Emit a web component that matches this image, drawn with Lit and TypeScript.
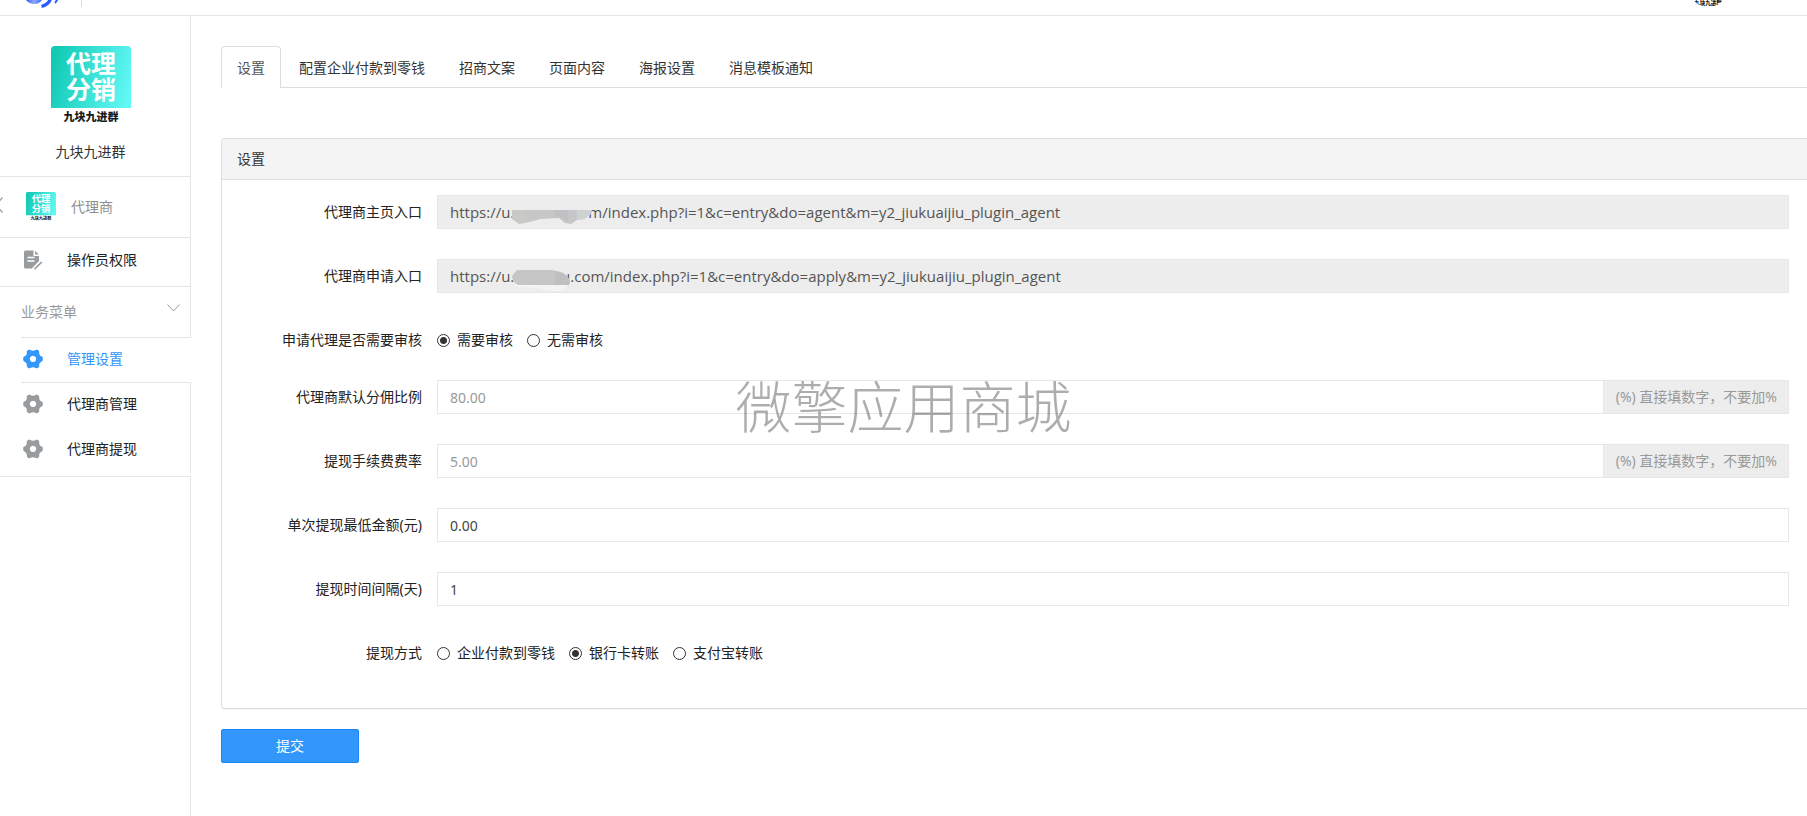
import { LitElement, html, svg, css, nothing } from "lit";
import { customElement, property, state } from "lit/decorators.js";
import { classMap } from "lit/directives/class-map.js";

const fontStack = css`"Noto Sans", "Noto Sans CJK SC", sans-serif`;

@customElement("agent-logo")
class AgentLogo extends LitElement {
  static styles = css`
    :host {
      display: block;
    }
    svg {
      display: block;
      width: 100%;
      height: 100%;
    }
    .title {
      font: 700 25px "Noto Sans CJK SC", sans-serif;
      fill: #fff;
    }
    .caption {
      font: 900 11px "Noto Sans CJK SC", sans-serif;
      fill: #1c1c1c;
    }
  `;

  @property({ type: Boolean, attribute: "caption-only" }) captionOnly = false;

  render() {
    return html`
      <svg viewBox="0 0 80 80" aria-hidden="true">
        <defs>
          <linearGradient id="teal" x1="0" y1="0.4" x2="1" y2="0.6">
            <stop offset="0" stop-color="#12c9b5" />
            <stop offset="1" stop-color="#60f8f4" />
          </linearGradient>
        </defs>
        <path d="M0 62V4a4 4 0 0 1 4-4h72a4 4 0 0 1 4 4v58z" fill="url(#teal)" />
        ${this.captionOnly
          ? nothing
          : svg`
              <text class="title" x="40" y="27" text-anchor="middle">代理</text>
              <text class="title" x="40" y="53" text-anchor="middle">分销</text>
            `}
        <text class="caption" x="40" y="75" text-anchor="middle">九块九进群</text>
      </svg>
    `;
  }
}

const gearIcon = svg`
  <path fill="currentColor" fill-rule="evenodd" d="M5.2 0.9 Q6.2 0.3 7.2 0.9 Q10 2.4 12.8 0.9 Q13.8 0.3 14.8 0.9 L15.6 1.5 Q16.4 2.2 16.2 3.2 Q16 6.6 18.8 7.4 Q19.7 7.8 19.8 8.7 L19.8 11.1 Q19.7 12 18.8 12.4 Q16 13.4 16.2 16.6 Q16.4 17.6 15.6 18.3 L14.8 18.9 Q13.8 19.5 12.8 18.9 Q10 17.4 7.2 18.9 Q6.2 19.5 5.2 18.9 L4.4 18.3 Q3.6 17.6 3.8 16.6 Q4 13.4 1.2 12.4 Q0.3 12 0.2 11.1 L0.2 8.7 Q0.3 7.8 1.2 7.4 Q4 6.6 3.8 3.2 Q3.6 2.2 4.4 1.5 Z M10 6.7 a3.2 3.2 0 1 0 0.01 0 Z"/>
`;

const docIcon = svg`
  <path fill="currentColor" d="M2.500 0.500H10.500V6H16V11L8.800 18.500H2.500A1.500 1.500 0 0 1 1 17V2A1.500 1.500 0 0 1 2.500 0.500z"/>
  <path fill="currentColor" d="M12 0.700L15.800 4.500H12z"/>
  <path stroke="#fff" stroke-width="1.300" fill="none" d="M4.500 7.500H11.500M4.500 11H11.500"/>
  <path stroke="currentColor" stroke-width="1.700" fill="none" d="M11.500 19.200L18.700 12"/>
`;

interface MenuItem {
  id: string;
  label: string;
}

const menuItems: MenuItem[] = [
  { id: "settings", label: "管理设置" },
  { id: "agents", label: "代理商管理" },
  { id: "withdraw", label: "代理商提现" },
];

@customElement("side-bar")
class SideBar extends LitElement {
  @state() private active = "settings";

  static styles = css`
    :host {
      display: flex;
      flex-direction: column;
      width: 191px;
      flex: none;
    }
    .brand,
    .agent,
    .operator,
    .group,
    .item,
    .filler {
      box-sizing: border-box;
      border-right: 1px solid #e5e5e5;
    }
    .brand {
      height: 161px;
      padding: 30px 9px 0 0;
      border-bottom: 1px solid #e5e5e5;
      display: flex;
      flex-direction: column;
      align-items: center;
      gap: 16px;
      color: #333;
    }
    .brand agent-logo {
      width: 80px;
      height: 80px;
    }
    .agent {
      height: 61px;
      border-bottom: 1px solid #e5e5e5;
      display: flex;
      align-items: center;
      color: #8f8f8f;
      text-decoration: none;
    }
    .back {
      width: 3px;
      height: 16px;
      margin-right: 23px;
      padding-bottom: 4px;
      overflow: hidden;
    }
    .agent agent-logo {
      width: 30px;
      height: 30px;
      margin-right: 15px;
    }
    .operator,
    .item {
      display: flex;
      align-items: center;
      gap: 24px;
      padding-left: 23px;
      color: #222;
      text-decoration: none;
    }
    .operator {
      height: 49px;
      padding-bottom: 5px;
      border-bottom: 1px solid #e5e5e5;
    }
    .icon {
      width: 20px;
      height: 20px;
      color: #999c9e;
      flex: none;
    }
    .group {
      height: 51px;
      margin-left: 21px;
      padding: 0 10px 0 0;
      display: flex;
      align-items: center;
      justify-content: space-between;
      font: inherit;
      color: #999;
      background: none;
      border-width: 0 1px 1px 0;
      border-style: solid;
      border-color: #e5e5e5;
      text-align: left;
    }
    .chevron {
      width: 13px;
      height: 8px;
      padding-bottom: 8px;
    }
    .list {
      display: flex;
      flex-direction: column;
      padding-bottom: 3px;
      border-bottom: 1px solid #e5e5e5;
    }
    .item {
      height: 45px;
      padding-left: 2px;
      margin-left: 21px;
      padding-bottom: 4px;
    }
    .item.active {
      color: #3296fa;
      border-right-color: transparent;
      border-bottom: 1px solid #e5e5e5;
      padding-bottom: 3px;
    }
    .item.active .icon {
      color: #3296fa;
    }
    .filler {
      flex: 1;
    }
  `;

  private pick(e: Event, id: string) {
    e.preventDefault();
    this.active = id;
  }

  render() {
    return html`
      <div class="brand">
        <agent-logo></agent-logo>
        <span>九块九进群</span>
      </div>
      <a class="agent" href="#agent">
        <svg class="back" viewBox="0 0 3 16" aria-hidden="true">
          <path d="M2.500 0.500L-4 8L2.500 15.500" fill="none" stroke="#999" stroke-width="1.200" />
        </svg>
        <agent-logo></agent-logo>
        <span>代理商</span>
      </a>
      <a class="operator" href="#operator">
        <svg class="icon" viewBox="0 0 20 20" aria-hidden="true">${docIcon}</svg>
        <span>操作员权限</span>
      </a>
      <button class="group" type="button">
        <span>业务菜单</span>
        <svg class="chevron" viewBox="0 0 13 8" aria-hidden="true">
          <path d="M0.500 0.500L6.500 7L12.500 0.500" fill="none" stroke="#999" />
        </svg>
      </button>
      <nav class="list">
        ${menuItems.map(
          (m) => html`
            <a
              class=${classMap({ item: true, active: m.id === this.active })}
              href="#${m.id}"
              @click=${(e: Event) => this.pick(e, m.id)}
            >
              <svg class="icon" viewBox="0 0 20 20" aria-hidden="true">${gearIcon}</svg>
              <span>${m.label}</span>
            </a>
          `
        )}
      </nav>
      <div class="filler"></div>
    `;
  }
}

interface Field {
  id: string;
  label: string;
  kind: "link" | "rate" | "text" | "radio";
  value: string;
  options?: string[];
  mask?: unknown;
}

const gap = (n: number) => "\u00a0".repeat(n);

const homeMask = html`
  <svg class="mask" viewBox="0 0 90 34" aria-hidden="true">
    <path d="M3 15h80l-2 5-6 4-7 1-6 4-6-1-6-5-18 1-16 4-6 1-7-5z" fill="#c6c7c6" />
    <path d="M3 15h14v12l-5 1-7-4z" fill="#c9cac6" />
    <path d="M45 15h14v13l-9-6-5 1z" fill="#c0c1c4" />
    <path d="M68 15h15l-2 5-6 4-7 1z" fill="#d0d1d1" />
  </svg>
`;

const applyMask = html`
  <svg class="mask" viewBox="0 0 90 34" aria-hidden="true">
    <path d="M4 26h54l-5 6-10 0-14-3-20-1z" fill="#f4f4f4" />
    <path d="M8 11h35l9 2 6 4 3 5-1 4H9l-5-4-1-5z" fill="#c6c6c6" />
    <path d="M46 12l8 2 5 4 2 4-1 4H46z" fill="#bfbfbf" />
  </svg>
`;

const rateHint = "(%) 直接填数字，不要加%";

const fields: Field[] = [
  {
    id: "home",
    label: "代理商主页入口",
    kind: "link",
    value: `https://u.${gap(19)}m/index.php?i=1&c=entry&do=agent&m=y2_jiukuaijiu_plugin_agent`,
    mask: homeMask,
  },
  {
    id: "apply",
    label: "代理商申请入口",
    kind: "link",
    value: `https://u.${gap(12)}u.com/index.php?i=1&c=entry&do=apply&m=y2_jiukuaijiu_plugin_agent`,
    mask: applyMask,
  },
  {
    id: "review",
    label: "申请代理是否需要审核",
    kind: "radio",
    value: "需要审核",
    options: ["需要审核", "无需审核"],
  },
  { id: "share", label: "代理商默认分佣比例", kind: "rate", value: "80.00" },
  { id: "fee", label: "提现手续费费率", kind: "rate", value: "5.00" },
  { id: "minimum", label: "单次提现最低金额(元)", kind: "text", value: "0.00" },
  { id: "interval", label: "提现时间间隔(天)", kind: "text", value: "1" },
  {
    id: "method",
    label: "提现方式",
    kind: "radio",
    value: "银行卡转账",
    options: ["企业付款到零钱", "银行卡转账", "支付宝转账"],
  },
];

@customElement("form-row")
class FormRow extends LitElement {
  @property({ attribute: false }) field!: Field;

  static styles = css`
    :host {
      display: block;
    }
    .row {
      display: grid;
      grid-template-columns: 185px minmax(0, 1fr);
      column-gap: 15px;
      margin-bottom: 30px;
    }
    .name {
      text-align: right;
      line-height: 20px;
      padding-top: 7px;
      color: #222;
    }
    .control {
      position: relative;
      display: flex;
    }
    .box {
      box-sizing: border-box;
      flex: 1;
      min-width: 0;
      height: 34px;
      padding: 0 12px;
      border: 1px solid #e7e7e7;
      border-radius: 0;
      background: #fff;
      color: #444;
      font: inherit;
      outline: none;
    }
    .box[readonly] {
      background: #ededed;
      color: #555;
      font-family: "Open Sans", sans-serif;
      font-size: 15px;
    }
    .box.rate {
      color: #999;
      border-right: 0;
    }
    .hint {
      box-sizing: border-box;
      height: 34px;
      padding: 0 11px 0 12px;
      border: 1px solid #e7e7e7;
      background: #ededed;
      color: #999;
      line-height: 32px;
      white-space: nowrap;
    }
    .mask {
      position: absolute;
      left: 72px;
      top: 0;
      width: 90px;
      height: 34px;
      pointer-events: none;
    }
    .options {
      display: flex;
      gap: 14px;
      height: 27px;
      padding-top: 7px;
      box-sizing: border-box;
    }
    .option {
      display: flex;
      align-items: center;
      gap: 7px;
      height: 20px;
      color: #222;
    }
    .radio {
      appearance: none;
      box-sizing: border-box;
      width: 13px;
      height: 13px;
      margin: 0;
      border: 1px solid #333;
      border-radius: 50%;
      background: #fff;
    }
    .radio:checked {
      background: radial-gradient(circle, #333 0 3px, #fff 4px);
    }
  `;

  private control(f: Field) {
    if (f.kind === "radio") {
      return html`
        <div class="options" role="radiogroup" aria-labelledby=${f.id}>
          ${f.options!.map(
            (o) => html`
              <label class="option">
                <input class="radio" type="radio" name=${f.id} .checked=${o === f.value} />
                <span>${o}</span>
              </label>
            `
          )}
        </div>
      `;
    }
    return html`
      <div class="control">
        <input
          id=${f.id}
          class=${classMap({ box: true, rate: f.kind === "rate" })}
          type="text"
          .value=${f.value}
          ?readonly=${f.kind === "link"}
        />
        ${f.kind === "rate" ? html`<span class="hint">${rateHint}</span>` : nothing}
        ${f.mask ?? nothing}
      </div>
    `;
  }

  render() {
    const f = this.field;
    return html`
      <div class="row">
        ${f.kind === "radio"
          ? html`<span class="name" id=${f.id}>${f.label}</span>`
          : html`<label class="name" for=${f.id}>${f.label}</label>`}
        ${this.control(f)}
      </div>
    `;
  }
}

const tabs = ["设置", "配置企业付款到零钱", "招商文案", "页面内容", "海报设置", "消息模板通知"];

@customElement("app-root")
class AppRoot extends LitElement {
  @state() private tab = 0;

  static styles = css`
    :host {
      position: relative;
      display: flex;
      flex-direction: column;
      min-height: 100vh;
      overflow: hidden;
      font-family: ${fontStack};
      font-size: 14px;
      line-height: 20px;
      color: #333;
      background: #fff;
    }
    .top {
      box-sizing: border-box;
      height: 16px;
      border-bottom: 1px solid #e5e5e5;
      display: flex;
      align-items: flex-start;
      padding: 0 79px 0 26px;
      overflow: hidden;
    }
    .mark {
      width: 34px;
      height: 9px;
    }
    .divider {
      width: 1px;
      height: 7px;
      margin-left: 21px;
      background: #ddd;
    }
    .avatar {
      width: 40px;
      height: 40px;
      margin-left: auto;
      align-self: flex-end;
      margin-bottom: 8px;
      flex: none;
      border-radius: 50%;
      overflow: hidden;
    }
    .body {
      flex: 1;
      display: flex;
    }
    .main {
      flex: 1;
      min-width: 0;
      padding: 30px 0 30px 30px;
    }
    .tabs {
      display: flex;
      gap: 2px;
      border-bottom: 1px solid #ddd;
      margin-bottom: 50px;
    }
    .tab {
      padding: 11px 15px 9px;
      height: 20px;
      border: 1px solid transparent;
      border-bottom: 0;
      border-radius: 4px 4px 0 0;
      margin-bottom: -1px;
      color: #333;
      text-decoration: none;
      white-space: nowrap;
    }
    .tab.active {
      padding-bottom: 10px;
      border-color: #ddd;
      background: #fff;
      color: #555;
    }
    .panel {
      border: 1px solid #ddd;
      border-right: 0;
      border-radius: 4px 0 0 4px;
      box-shadow: 0 1px 1px rgba(0, 0, 0, 0.05);
      margin-bottom: 20px;
    }
    .panel-head {
      margin: 0;
      padding: 10px 15px;
      font-size: 14px;
      font-weight: 400;
      line-height: 20px;
      background: #f4f4f4;
      border-bottom: 1px solid #ddd;
      border-radius: 4px 0 0 0;
    }
    .panel-body {
      padding: 15px 18px 15px 15px;
    }
    .submit {
      display: block;
      width: 138px;
      height: 34px;
      border: 1px solid #1987f9;
      border-radius: 2px;
      background: #3296fa;
      color: #fff;
      font: inherit;
    }
    .watermark {
      position: absolute;
      left: 50%;
      top: 50%;
      transform: translate(-50%, -50%);
      padding-bottom: 8px;
      font: 300 56px/64px "Noto Sans CJK SC", sans-serif;
      color: rgba(0, 0, 0, 0.32);
      white-space: nowrap;
      pointer-events: none;
    }
  `;

  private pick(e: Event, index: number) {
    e.preventDefault();
    this.tab = index;
  }

  render() {
    return html`
      <header class="top">
        <svg class="mark" viewBox="0 0 34 9" aria-hidden="true">
          <defs>
            <linearGradient id="swirl">
              <stop offset="0" stop-color="#2b5bff" />
              <stop offset="0.500" stop-color="#8fa9fd" />
              <stop offset="1" stop-color="#3d68ff" />
            </linearGradient>
          </defs>
          <path d="M0 0Q3 4 9 4Q13 4 16 0z" fill="url(#swirl)" />
          <path d="M15.500 6.300Q22 5 24.500 -1" fill="none" stroke="#2b5bff" stroke-width="3.400" />
          <path d="M29 3Q30 2 31.500 -1" fill="none" stroke="#2b5bff" stroke-width="2" />
        </svg>
        <span class="divider"></span>
        <agent-logo class="avatar" caption-only></agent-logo>
      </header>
      <div class="body">
        <side-bar></side-bar>
        <main class="main">
          <nav class="tabs">
            ${tabs.map(
              (t, i) => html`
                <a
                  class=${classMap({ tab: true, active: i === this.tab })}
                  href="#tab-${i}"
                  @click=${(e: Event) => this.pick(e, i)}
                  >${t}</a
                >
              `
            )}
          </nav>
          <form @submit=${(e: Event) => e.preventDefault()}>
            <section class="panel">
              <h2 class="panel-head">设置</h2>
              <div class="panel-body">
                ${fields.map((f) => html`<form-row .field=${f}></form-row>`)}
              </div>
            </section>
            <button class="submit" type="submit">提交</button>
          </form>
        </main>
      </div>
      <div class="watermark" aria-hidden="true">微擎应用商城</div>
    `;
  }
}
